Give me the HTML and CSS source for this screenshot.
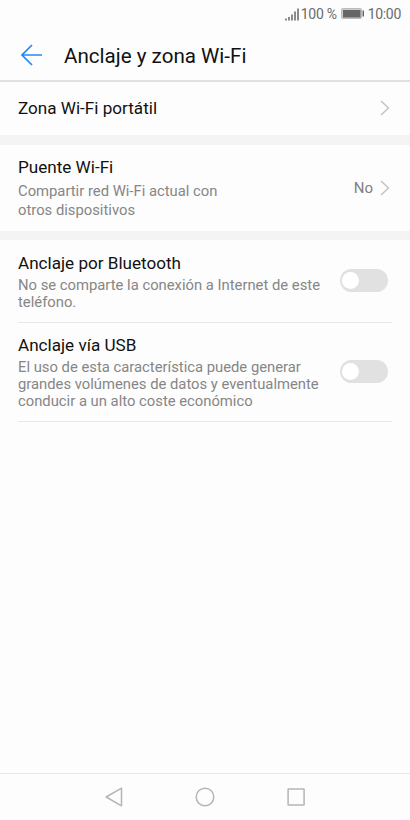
FILE: index.html
```html
<!DOCTYPE html>
<html lang="es">
  <head>
    <meta charset="UTF-8" />
    <meta name="viewport" content="width=device-width, initial-scale=1.0" />
    <title>Anclaje y zona Wi-Fi</title>
    <link rel="stylesheet" href="styles.css">
  </head>
  <body>
    <div class="status">
      <svg class="signal" width="14" height="13" viewBox="0 0 14 13">
        <path d="M1 10.500v2M4 9v3.500M7 6.500v6M10 3.500v9M13 0.500v12" />
      </svg>
      <span class="percent">100 %</span>
      <svg class="battery" width="24" height="12" viewBox="0 0 24 12">
        <rect class="shell" x="0.500" y="0.500" width="20" height="10" rx="1" />
        <rect class="charge" x="2" y="2" width="17.500" height="7.500" />
        <rect class="charge" x="21.500" y="2.500" width="1.500" height="6" />
      </svg>
      <span class="clock">10:00</span>
    </div>

    <header>
      <svg class="back" width="22" height="22" viewBox="0 0 22 22">
        <path d="M11 1L1 11L11 21M1 11H21" />
      </svg>
      <h1>Anclaje y zona Wi-Fi</h1>
    </header>

    <main>
      <section class="row hotspot">
        <h3>Zona Wi-Fi portátil</h3>
        <svg class="chevron" width="10" height="16" viewBox="0 0 10 16">
          <path d="M1 1L8.500 8L1 15" />
        </svg>
      </section>

      <section class="row bridge">
        <div class="text">
          <h3>Puente Wi-Fi</h3>
          <p>Compartir red Wi-Fi actual con<br />otros dispositivos</p>
        </div>
        <span class="value">No</span>
        <svg class="chevron" width="10" height="16" viewBox="0 0 10 16">
          <path d="M1 1L8.500 8L1 15" />
        </svg>
      </section>

      <section class="row bluetooth">
        <div class="text">
          <h3>Anclaje por Bluetooth</h3>
          <p>No se comparte la conexión a Internet de este<br />teléfono.</p>
        </div>
        <div class="toggle"></div>
      </section>

      <section class="row usb">
        <div class="text">
          <h3>Anclaje vía USB</h3>
          <p>El uso de esta característica puede generar<br />grandes volúmenes de datos y eventualmente<br />conducir a un alto coste económico</p>
        </div>
        <div class="toggle"></div>
      </section>
    </main>

    <nav>
      <svg width="20" height="20" viewBox="0 0 20 20">
        <path d="M17.500 1.200V18.800L2.200 10Z" />
      </svg>
      <svg width="20" height="20" viewBox="0 0 20 20">
        <circle cx="10" cy="10" r="8.800" />
      </svg>
      <svg width="20" height="20" viewBox="0 0 20 20">
        <rect x="2.100" y="2" width="16" height="16" rx="0.500" />
      </svg>
    </nav>
  </body>
</html>
```

FILE: styles.css
```css
* {
  box-sizing: border-box;
}
body {
  font-family: Roboto, sans-serif;
  color: #111;
  background-color: #fdfdfd;
  margin: 0;
  height: 100vh;
  display: flex;
  flex-direction: column;
}
h1,
h3,
p {
  margin: 0;
  font-weight: normal;
  white-space: nowrap;
}
svg {
  fill: none;
  flex-shrink: 0;
}
.status {
  height: 28px;
  padding-right: 9px;
  display: flex;
  justify-content: flex-end;
  align-items: center;
  font-size: 14px;
  letter-spacing: -0.3px;
  color: #6b6b6b;
}
.signal {
  stroke: #777;
  stroke-width: 1.7;
  margin-right: 2px;
}
.battery {
  margin: 0 3px 0 4px;
}
.shell {
  fill: #ccc;
  stroke: #bbb;
}
.charge {
  fill: #666;
}
header {
  height: 54px;
  padding: 2px 0 0 21px;
  display: flex;
  align-items: center;
  border-bottom: 2px solid #e0e0e0;
}
.back {
  stroke: #2489f5;
  stroke-width: 1.7;
  margin-right: 21px;
}
h1 {
  font-size: 20.6px;
  padding-top: 2px;
}
h3 {
  font-size: 17.1px;
  line-height: 22px;
}
p {
  font-size: 14.8px;
  line-height: 17px;
  color: #868686;
}
.row {
  display: flex;
  align-items: center;
  padding: 0 20px 0 18px;
}
.hotspot {
  height: 63px;
  padding-bottom: 1px;
  border-bottom: 10px solid #f4f4f4;
  justify-content: space-between;
}
.bridge {
  height: 95px;
  border-bottom: 9px solid #f4f4f4;
}
.bridge p {
  line-height: 19px;
  margin-top: 4px;
}
.text {
  flex: 1;
}
.value {
  font-size: 15px;
  color: #808080;
  margin-right: 7px;
}
.chevron {
  stroke: #c4c4c4;
  stroke-width: 1.5;
}
.bluetooth,
.usb {
  margin: 0 18px;
  padding: 0 4px 1px 0;
  border-bottom: 1px solid #e8e8e8;
}
.bluetooth {
  height: 83px;
}
.usb {
  height: 99px;
}
.bluetooth .text,
.usb .text {
  padding-top: 1px;
}
.bluetooth p,
.usb p {
  padding-top: 3px;
}
.toggle {
  width: 48px;
  height: 23px;
  padding: 3px 2px;
  border-radius: 12px;
  background-color: #e1e1e1;
}
.toggle::before {
  content: "";
  display: block;
  width: 17px;
  height: 17px;
  border-radius: 50%;
  background-color: #fff;
}
nav {
  height: 47px;
  margin-top: auto;
  border-top: 1px solid #e6e6e6;
  display: flex;
  justify-content: center;
  align-items: center;
  gap: 71px;
}
nav svg {
  stroke: #b5b5b5;
  stroke-width: 1.5;
  stroke-linejoin: round;
}
```
